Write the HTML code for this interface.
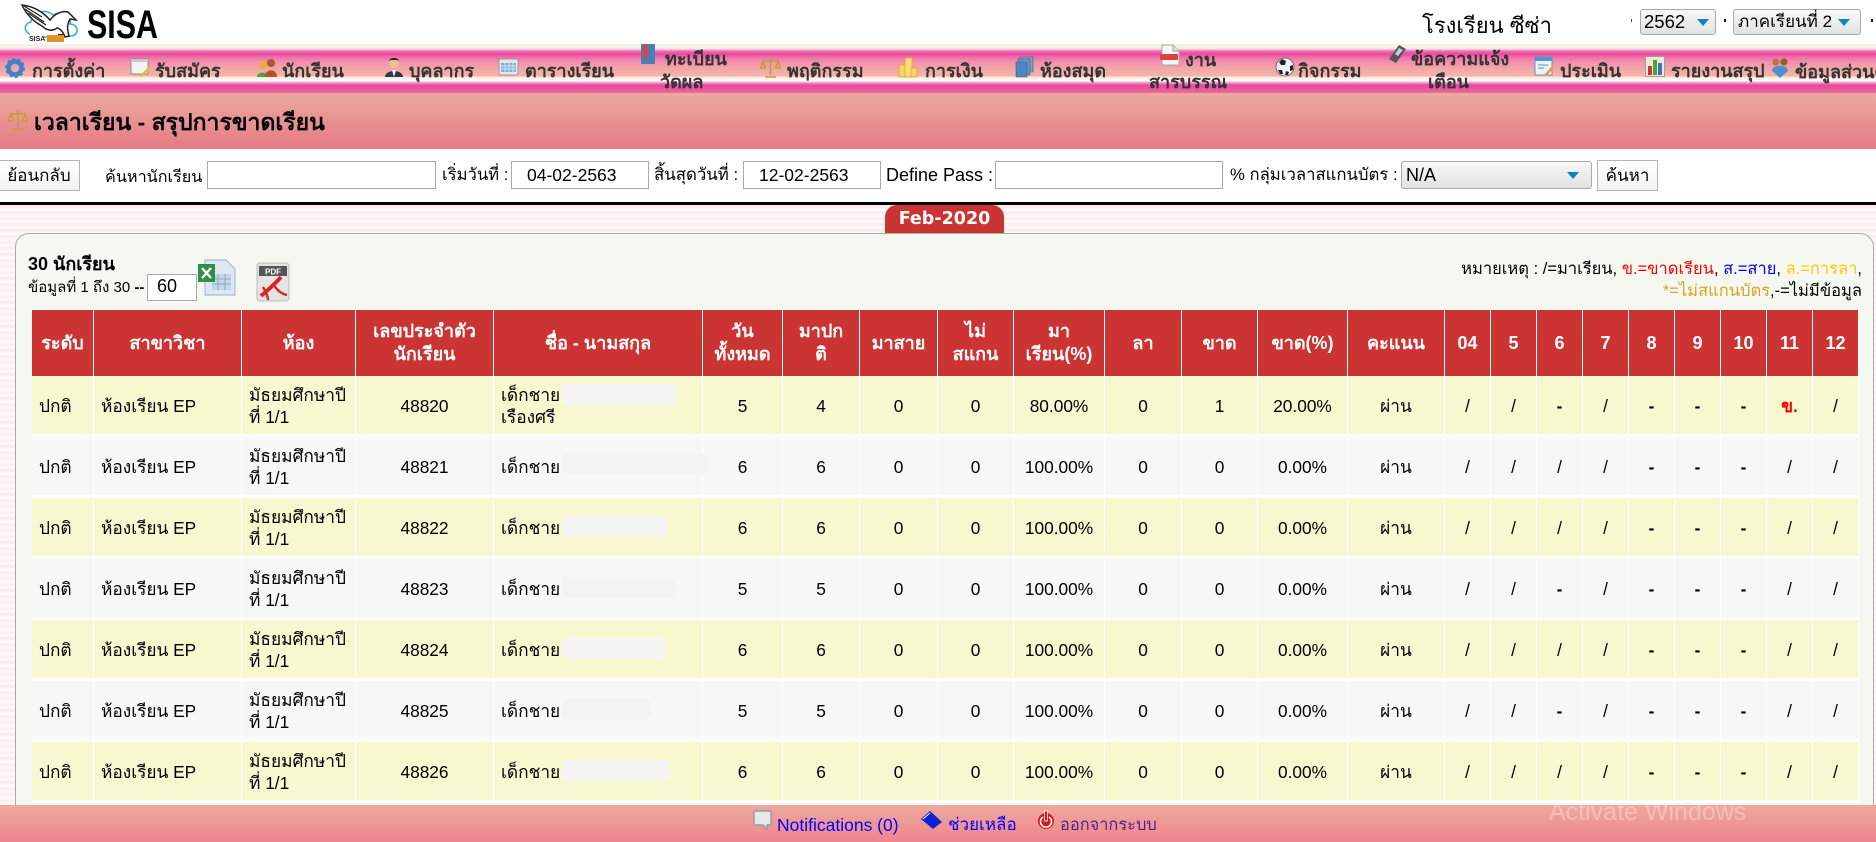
<!DOCTYPE html>
<html lang="th">
<head>
<meta charset="utf-8">
<title>SISA</title>
<style>
html,body{margin:0;padding:0;width:1876px;height:842px;overflow:hidden;background:#fff;}
body{position:relative;font-family:"Liberation Sans","Noto Sans CJK JP",sans-serif;font-size:17px;color:#000;}
.a{position:absolute;white-space:nowrap;}
#nav{position:absolute;left:0;top:44px;width:1876px;height:49px;overflow:hidden;
background:linear-gradient(to bottom,#f6f1e8 0,#f6f1e8 4px,#fbdcec 5px,#f070b0 7px,#ea48a0 10px,#ee6cac 13px,#f292ac 18px,#f3aaa6 26px,#f4b4aa 32px,#fbe6df 33px,#fffaf4 36px,#fff 37px,#f6b6d6 38px,#ea48a0 41px,#ea52a0 44px,#e86c94 49px);}
.n{position:absolute;white-space:nowrap;color:#333;font-weight:bold;font-size:18px;line-height:20px;}
.i{position:absolute;}
#title{position:absolute;left:0;top:93px;width:1876px;height:56px;background:linear-gradient(to bottom,#ebaa9e,#e57a85);}
#bg{position:absolute;left:0;top:205px;width:1876px;height:637px;background:repeating-linear-gradient(to bottom,#fbeeee 0,#fbeeee 3px,#fff8f6 3px,#fff8f6 6px);}
#line{position:absolute;left:0;top:202px;width:1876px;height:3px;background:#000;}
#card{position:absolute;left:15px;top:233px;width:1859px;height:620px;background:#f5f8f0;border:1px solid #aaa;border-radius:14px;box-sizing:border-box;}
#tab{position:absolute;left:885px;top:205px;width:119px;height:28px;background:#cc3333;border-radius:12px 12px 0 0;color:#fff;font-family:"DejaVu Sans",sans-serif;font-weight:bold;font-size:17.5px;line-height:29px;text-align:center;}
.inp{position:absolute;box-sizing:border-box;height:28px;background:#fff;border:1px solid #a9a9a9;font-size:17.5px;line-height:26px;padding-left:15px;}
.btn{position:absolute;box-sizing:border-box;background:linear-gradient(#fff,#f2f2f2);border:1px solid #b5b5b5;height:31px;text-align:center;font-size:17px;line-height:29px;}
.sel{position:absolute;box-sizing:border-box;background:linear-gradient(#f8f8f8,#e2e2e2);border:1px solid #aaa;border-radius:3px;font-size:17px;}
.tri{position:absolute;width:0;height:0;border-left:6px solid transparent;border-right:6px solid transparent;border-top:7px solid #0a86bd;}
#wrap{position:absolute;left:32px;top:310px;width:1827px;}
table{border-collapse:separate;border-spacing:0;table-layout:fixed;width:1827px;font-size:17.3px;line-height:22px;}
th{height:66px;padding:0;background:#cc3333;color:#fff;font-weight:bold;font-size:18px;border-right:1px solid #fff;box-sizing:border-box;line-height:23px;}
td{height:61px;padding:1px 0 0 0;border-right:1px solid #fff;border-bottom:3px solid #fff;box-sizing:border-box;text-align:center;}
tr.o td{background:#f7f8cf;}
tr.e td{background:#f7f7f7;}
td.l{text-align:left;padding-left:7px;}
td.r{color:#f00;font-weight:bold;}
.blob{position:absolute;background:#f4f4f2;border-radius:6px;height:21px;}
#foot{position:absolute;left:0;top:805px;width:1876px;height:37px;background:linear-gradient(to bottom,#eeaa9e,#ee858d);}
</style>
</head>
<body>

<!-- Logo -->
<svg class="i" style="left:20px;top:2px" width="62" height="42" viewBox="0 0 62 42">
  <path d="M10 32 C4 30 3 22 11 20 C12 10 26 6 33 13 C42 8 52 14 50 22 C58 22 60 32 52 34 L24 35" fill="none" stroke="#3fa9e0" stroke-width="1.6"/>
  <path d="M2 3 C12 4 22 9 30 18 C33 14 40 8 48 10 L56 18 L50 17 C47 22 47 27 49 34 L45 35 C43 30 41 27 37 26 C32 30 26 28 22 24 C14 20 6 12 2 3Z" fill="#fff" stroke="#222" stroke-width="1.5"/>
  <path d="M5 7 L24 20 M8 11 L26 23 M4 4 L22 15" stroke="#222" stroke-width="1.2"/>
  <rect x="38" y="32" width="6" height="5" fill="#222"/>
  <text x="9" y="39" font-family="Liberation Sans" font-size="7" font-weight="bold" fill="#222">SISA</text>
  <rect x="27" y="33" width="17" height="7" fill="#e8912c"/>
</svg>
<div class="a" style="left:87px;top:3px;font-weight:bold;font-size:40px;line-height:44px;transform:scaleX(.76);transform-origin:left top;">SISA</div>

<div class="a" style="left:1422px;top:11px;font-size:22px;line-height:30px;">โรงเรียน ซีซ่า</div>
<div class="a" style="left:1631px;top:19px;width:1px;height:3px;background:#444;"></div>
<div class="sel" style="left:1640px;top:9px;width:76px;height:26px;line-height:24px;padding-left:3px;font-size:18.5px;">2562<span class="tri" style="left:56px;top:9px;"></span></div>
<div class="a" style="left:1724px;top:19px;width:2px;height:3px;background:#111;"></div>
<div class="sel" style="left:1733px;top:9px;width:128px;height:26px;line-height:24px;padding-left:4px;">ภาคเรียนที่ 2<span class="tri" style="left:104px;top:9px;"></span></div>
<div class="a" style="left:1871px;top:19px;width:2px;height:3px;background:#111;"></div>

<!-- Nav -->
<div id="nav">
  <svg class="i" style="left:5px;top:14px" width="20" height="20" viewBox="0 0 20 20"><circle cx="10" cy="10" r="6.5" fill="none" stroke="#3d83c9" stroke-width="4.5"/><circle cx="10" cy="10" r="9" fill="none" stroke="#3d83c9" stroke-width="2" stroke-dasharray="3 2.6"/></svg>
  <div class="n" style="left:32px;top:17px">การตั้งค่า</div>

  <svg class="i" style="left:130px;top:14px" width="21" height="20" viewBox="0 0 21 20"><rect x="1" y="1" width="17" height="15" fill="#f3f3f3" stroke="#8b8b8b"/><rect x="1" y="1" width="17" height="3" fill="#c9c9c9"/><path d="M10 18 L18 9 L20 11 L12 19Z" fill="#e8b83a"/></svg>
  <div class="n" style="left:155px;top:17px">รับสมัคร</div>

  <svg class="i" style="left:256px;top:14px" width="22" height="20" viewBox="0 0 22 20"><circle cx="7" cy="7" r="4" fill="#e3b23c"/><path d="M1 19 C1 13 13 13 13 19Z" fill="#4ba04a"/><circle cx="15" cy="5" r="4" fill="#a85a28"/><path d="M9 19 C9 10 21 10 21 19Z" fill="#b5502e"/></svg>
  <div class="n" style="left:282px;top:17px">นักเรียน</div>

  <svg class="i" style="left:384px;top:13px" width="20" height="21" viewBox="0 0 20 21"><circle cx="10" cy="6" r="5" fill="#e8c09a"/><path d="M5 4 C6 0 14 0 15 4 L13 3 H7Z" fill="#222"/><path d="M1 20 C1 12 19 12 19 20Z" fill="#2c3a4f"/><path d="M8 13 L12 13 L10 20Z" fill="#fff"/></svg>
  <div class="n" style="left:409px;top:17px">บุคลากร</div>

  <svg class="i" style="left:498px;top:14px" width="21" height="18" viewBox="0 0 21 18"><rect x="1" y="1" width="19" height="16" rx="1" fill="#e6e6e6" stroke="#999"/><rect x="3" y="5" width="15" height="9" fill="#7eaee0"/><path d="M3 8H18M3 11H18M7 5V14M11 5V14M15 5V14" stroke="#d8e6f5"/></svg>
  <div class="n" style="left:525px;top:17px">ตารางเรียน</div>

  <svg class="i" style="left:640px;top:0" width="16" height="21" viewBox="0 0 16 21"><rect x="1" y="0" width="14" height="20" rx="1" fill="#4a7fb5"/><rect x="3" y="1" width="5" height="13" fill="#d24848"/></svg>
  <div class="n" style="left:665px;top:5px">ทะเบียน</div>
  <div class="n" style="left:660px;top:28px">วัดผล</div>

  <svg class="i" style="left:760px;top:12px" width="21" height="22" viewBox="0 0 21 22" fill="none" stroke="#c99a3a" stroke-width="1.6"><path d="M10.5 1V19M5 21H16M3 5H18"/><path d="M3 5L0.8 12H5.2ZM18 5L15.8 12H20.2Z" fill="#e6c15e"/></svg>
  <div class="n" style="left:787px;top:17px">พฤติกรรม</div>

  <svg class="i" style="left:898px;top:13px" width="20" height="21" viewBox="0 0 20 21"><rect x="1" y="8" width="7" height="12" fill="#f6d467" stroke="#d9a935" stroke-width=".8"/><rect x="7" y="1" width="7" height="19" fill="#f9de78" stroke="#d9a935" stroke-width=".8"/><rect x="13" y="11" width="6" height="9" fill="#f6d467" stroke="#d9a935" stroke-width=".8"/></svg>
  <div class="n" style="left:925px;top:17px">การเงิน</div>

  <svg class="i" style="left:1015px;top:12px" width="19" height="22" viewBox="0 0 19 22"><path d="M5 1H18V16H5Z" fill="#7aa0c8" stroke="#3b5f85" stroke-width=".6"/><path d="M3 3H15V19H3Z" fill="#6a95c3" stroke="#3b5f85" stroke-width=".6"/><path d="M1 6H12V21H1Z" fill="#4f86bf" stroke="#3b5f85" stroke-width=".6"/></svg>
  <div class="n" style="left:1040px;top:17px">ห้องสมุด</div>

  <svg class="i" style="left:1159px;top:0" width="22" height="22" viewBox="0 0 22 22"><path d="M3 1H14L20 7V21H3Z" fill="#f6f6f6" stroke="#a5a5a5"/><path d="M14 1V7H20" fill="#ddd" stroke="#a5a5a5"/><rect x="1" y="10" width="18" height="6" rx="1" fill="#d9443f"/></svg>
  <div class="n" style="left:1185px;top:6px">งาน</div>
  <div class="n" style="left:1149px;top:28px">สารบรรณ</div>

  <svg class="i" style="left:1275px;top:13px" width="20" height="21" viewBox="0 0 20 21"><circle cx="10" cy="10" r="9" fill="#f2f2f2" stroke="#555" stroke-width=".8"/><path d="M7 2L11 4L10 8L6 8L4 5ZM15 9L18 8L18 13L15 14ZM3 13L7 13L8 17L5 17ZM11 14L14 15L13 18L10 18Z" fill="#222"/></svg>
  <div class="n" style="left:1298px;top:17px">กิจกรรม</div>

  <svg class="i" style="left:1387px;top:1px" width="20" height="18" viewBox="0 0 20 18"><path d="M12 0L19 4L9 18L2 14Z" fill="#555"/><path d="M12 3L16 5L11 11L8 9Z" fill="#bcd0e0"/></svg>
  <div class="n" style="left:1411px;top:5px">ข้อความแจ้ง</div>
  <div class="n" style="left:1428px;top:28px">เตือน</div>

  <svg class="i" style="left:1534px;top:12px" width="20" height="21" viewBox="0 0 20 21"><rect x="1" y="1" width="17" height="18" fill="#eaf2fa" stroke="#5a94c8"/><rect x="1" y="1" width="17" height="4" fill="#5a94c8"/><path d="M4 9H14M4 12H10" stroke="#7a8a98"/><path d="M10 19L18 10L20 12L12 20Z" fill="#eb9c2c"/></svg>
  <div class="n" style="left:1560px;top:17px">ประเมิน</div>

  <svg class="i" style="left:1645px;top:12px" width="20" height="21" viewBox="0 0 20 21"><rect x="0.5" y="0.5" width="19" height="20" fill="#efe8d8" stroke="#a99"/><rect x="3" y="10" width="4" height="9" fill="#d62f2f"/><rect x="8" y="4" width="4" height="15" fill="#3da83d"/><rect x="13" y="7" width="4" height="12" fill="#3a70c8"/></svg>
  <div class="n" style="left:1671px;top:17px">รายงานสรุป</div>

  <svg class="i" style="left:1771px;top:13px" width="18" height="21" viewBox="0 0 18 21"><circle cx="5" cy="5" r="3.5" fill="#b9773d"/><circle cx="13" cy="5" r="3.5" fill="#8f5a30"/><path d="M1 14 C1 7 17 7 17 14 L9 21Z" fill="#4b92cc"/></svg>
  <div class="n" style="left:1795px;top:18px">ข้อมูลส่วนตัว</div>
</div>

<!-- Title -->
<div id="title"></div>
<svg class="i" style="left:8px;top:109px" width="20" height="21" viewBox="0 0 21 22" fill="none" stroke="#c99a3a" stroke-width="1.6"><path d="M10.5 1V19M5 21H16M3 5H18"/><path d="M3 5L0.8 12H5.2ZM18 5L15.8 12H20.2Z" fill="#e6c15e"/></svg>
<div class="a" style="left:34px;top:108px;font-weight:bold;font-size:23px;line-height:28px;">เวลาเรียน - สรุปการขาดเรียน</div>

<!-- Search -->
<div class="btn" style="left:-2px;top:160px;width:82px;">ย้อนกลับ</div>
<div class="a" style="left:105px;top:164px;line-height:26px;font-size:16.2px;">ค้นหานักเรียน</div>
<div class="inp" style="left:207px;top:161px;width:229px;"></div>
<div class="a" style="left:442px;top:163px;line-height:24px;font-size:16.6px;">เริ่มวันที่ :</div>
<div class="inp" style="left:511px;top:161px;width:138px;">04-02-2563</div>
<div class="a" style="left:654px;top:163px;line-height:24px;font-size:16.8px;">สิ้นสุดวันที่ :</div>
<div class="inp" style="left:743px;top:161px;width:138px;">12-02-2563</div>
<div class="a" style="left:886px;top:163px;line-height:24px;font-size:18px;">Define Pass :</div>
<div class="inp" style="left:995px;top:161px;width:228px;"></div>
<div class="a" style="left:1230px;top:162px;line-height:26px;font-size:16.7px;">% กลุ่มเวลาสแกนบัตร :</div>
<div class="sel" style="left:1401px;top:161px;width:191px;height:28px;line-height:27px;padding-left:4px;font-size:18px;">N/A<span class="tri" style="left:165px;top:10px;"></span></div>
<div class="btn" style="left:1597px;top:160px;width:61px;">ค้นหา</div>

<div id="line"></div>
<div id="bg"></div>
<div id="card"></div>
<div id="tab">Feb-2020</div>

<div class="a" style="left:28px;top:253px;font-weight:bold;font-size:18px;line-height:22px;">30 นักเรียน</div>
<div class="a" style="left:28px;top:278px;font-size:15px;line-height:20px;">ข้อมูลที่ 1 ถึง 30 <b>--</b></div>
<div class="inp" style="left:147px;top:274px;width:50px;height:27px;font-size:18px;line-height:23px;padding-left:9px;">60</div>
<svg class="i" style="left:198px;top:258px" width="38" height="38" viewBox="0 0 38 38"><path d="M7 2H28L37 11V37H7Z" fill="#dfe8f2" stroke="#9ab0c8"/><path d="M14 16H33V32H14Z" fill="#c4d7ea"/><path d="M14 21H33M14 26H33M20 16V32M27 16V32" stroke="#8aa8c8"/><rect x="0" y="6" width="17" height="18" fill="#2f8f45"/><path d="M4 10L13 20M13 10L4 20" stroke="#fff" stroke-width="2.4"/></svg>
<svg class="i" style="left:256px;top:262px" width="34" height="40" viewBox="0 0 34 40"><rect x="1" y="1" width="32" height="38" rx="3" fill="#e4e4e4" stroke="#bbb"/><rect x="3" y="4" width="28" height="10" fill="#555"/><text x="17" y="12.5" text-anchor="middle" font-family="Liberation Sans" font-size="8" font-weight="bold" fill="#fff">PDF</text><path d="M5 34C12 28 19 22 25 15" fill="none" stroke="#d8262c" stroke-width="4"/><path d="M17 22C21 28 25 32 31 33M7 25C10 30 12 34 12 38" fill="none" stroke="#d8262c" stroke-width="2.4"/></svg>

<div class="a" style="right:14px;top:258px;font-size:16.5px;line-height:22px;text-align:right;">หมายเหตุ : /=มาเรียน, <span style="color:#f00">ข.=ขาดเรียน</span>, <span style="color:#00f">ส.=สาย</span>, <span style="color:#fc0">ล.=การลา</span>,<br><span style="color:#daa520">*=ไม่สแกนบัตร</span>,-=ไม่มีข้อมูล</div>

<!-- Table -->
<div id="wrap">
<table>
<colgroup><col style="width:62px"><col style="width:148px"><col style="width:114px"><col style="width:138px"><col style="width:209px"><col style="width:80px"><col style="width:77px"><col style="width:78px"><col style="width:76px"><col style="width:91px"><col style="width:77px"><col style="width:76px"><col style="width:90px"><col style="width:97px"><col style="width:46px"><col style="width:46px"><col style="width:46px"><col style="width:46px"><col style="width:46px"><col style="width:46px"><col style="width:46px"><col style="width:46px"><col style="width:46px"></colgroup>
<tr><th>ระดับ</th><th>สาขาวิชา</th><th>ห้อง</th><th>เลขประจำตัว<br>นักเรียน</th><th>ชื่อ - นามสกุล</th><th>วัน<br>ทั้งหมด</th><th>มาปก<br>ติ</th><th>มาสาย</th><th>ไม่<br>สแกน</th><th>มา<br>เรียน(%)</th><th>ลา</th><th>ขาด</th><th>ขาด(%)</th><th>คะแนน</th><th>04</th><th>5</th><th>6</th><th>7</th><th>8</th><th>9</th><th>10</th><th>11</th><th>12</th></tr>
<tr class="o"><td class="l">ปกติ</td><td class="l">ห้องเรียน EP</td><td class="l">มัธยมศึกษาปี<br>ที่ 1/1</td><td>48820</td><td class="l">เด็กชาย<br>เรืองศรี</td><td>5</td><td>4</td><td>0</td><td>0</td><td>80.00%</td><td>0</td><td>1</td><td>20.00%</td><td>ผ่าน</td><td>/</td><td>/</td><td><b>-</b></td><td>/</td><td><b>-</b></td><td><b>-</b></td><td><b>-</b></td><td class="r">ข.</td><td>/</td></tr>
<tr class="e"><td class="l">ปกติ</td><td class="l">ห้องเรียน EP</td><td class="l">มัธยมศึกษาปี<br>ที่ 1/1</td><td>48821</td><td class="l">เด็กชาย</td><td>6</td><td>6</td><td>0</td><td>0</td><td>100.00%</td><td>0</td><td>0</td><td>0.00%</td><td>ผ่าน</td><td>/</td><td>/</td><td>/</td><td>/</td><td><b>-</b></td><td><b>-</b></td><td><b>-</b></td><td>/</td><td>/</td></tr>
<tr class="o"><td class="l">ปกติ</td><td class="l">ห้องเรียน EP</td><td class="l">มัธยมศึกษาปี<br>ที่ 1/1</td><td>48822</td><td class="l">เด็กชาย</td><td>6</td><td>6</td><td>0</td><td>0</td><td>100.00%</td><td>0</td><td>0</td><td>0.00%</td><td>ผ่าน</td><td>/</td><td>/</td><td>/</td><td>/</td><td><b>-</b></td><td><b>-</b></td><td><b>-</b></td><td>/</td><td>/</td></tr>
<tr class="e"><td class="l">ปกติ</td><td class="l">ห้องเรียน EP</td><td class="l">มัธยมศึกษาปี<br>ที่ 1/1</td><td>48823</td><td class="l">เด็กชาย</td><td>5</td><td>5</td><td>0</td><td>0</td><td>100.00%</td><td>0</td><td>0</td><td>0.00%</td><td>ผ่าน</td><td>/</td><td>/</td><td><b>-</b></td><td>/</td><td><b>-</b></td><td><b>-</b></td><td><b>-</b></td><td>/</td><td>/</td></tr>
<tr class="o"><td class="l">ปกติ</td><td class="l">ห้องเรียน EP</td><td class="l">มัธยมศึกษาปี<br>ที่ 1/1</td><td>48824</td><td class="l">เด็กชาย</td><td>6</td><td>6</td><td>0</td><td>0</td><td>100.00%</td><td>0</td><td>0</td><td>0.00%</td><td>ผ่าน</td><td>/</td><td>/</td><td>/</td><td>/</td><td><b>-</b></td><td><b>-</b></td><td><b>-</b></td><td>/</td><td>/</td></tr>
<tr class="e"><td class="l">ปกติ</td><td class="l">ห้องเรียน EP</td><td class="l">มัธยมศึกษาปี<br>ที่ 1/1</td><td>48825</td><td class="l">เด็กชาย</td><td>5</td><td>5</td><td>0</td><td>0</td><td>100.00%</td><td>0</td><td>0</td><td>0.00%</td><td>ผ่าน</td><td>/</td><td>/</td><td><b>-</b></td><td>/</td><td><b>-</b></td><td><b>-</b></td><td><b>-</b></td><td>/</td><td>/</td></tr>
<tr class="o"><td class="l">ปกติ</td><td class="l">ห้องเรียน EP</td><td class="l">มัธยมศึกษาปี<br>ที่ 1/1</td><td>48826</td><td class="l">เด็กชาย</td><td>6</td><td>6</td><td>0</td><td>0</td><td>100.00%</td><td>0</td><td>0</td><td>0.00%</td><td>ผ่าน</td><td>/</td><td>/</td><td>/</td><td>/</td><td><b>-</b></td><td><b>-</b></td><td><b>-</b></td><td>/</td><td>/</td></tr>
</table>
</div>

<!-- Scribbles -->
<div class="blob" style="left:562px;top:384px;width:114px;"></div>
<div class="blob" style="left:562px;top:454px;width:146px;"></div>
<div class="blob" style="left:562px;top:516px;width:105px;"></div>
<div class="blob" style="left:562px;top:577px;width:114px;"></div>
<div class="blob" style="left:562px;top:638px;width:103px;"></div>
<div class="blob" style="left:562px;top:699px;width:88px;"></div>
<div class="blob" style="left:562px;top:760px;width:108px;"></div>

<!-- Footer -->
<div id="foot"></div>
<svg class="i" style="left:753px;top:810px" width="19" height="20" viewBox="0 0 19 20"><path d="M2 1H17A1 1 0 0 1 18 2V14A1 1 0 0 1 17 15H14V19L10 15H2A1 1 0 0 1 1 14V2A1 1 0 0 1 2 1Z" fill="#e8e8e8" stroke="#999" stroke-width="1.4"/></svg>
<div class="a" style="left:777px;top:814px;color:#00f;line-height:22px;font-size:17.5px;">Notifications (0)</div>
<svg class="i" style="left:920px;top:810px" width="23" height="20" viewBox="0 0 23 20"><path d="M1 9L10 1L22 12L13 19Z" fill="#0a22d8"/><path d="M3 9L10 3" stroke="#fff" stroke-width="1"/></svg>
<div class="a" style="left:948px;top:814px;color:#00f;line-height:22px;">ช่วยเหลือ</div>
<svg class="i" style="left:1037px;top:810px" width="18" height="20" viewBox="0 0 18 20"><circle cx="9" cy="11" r="8" fill="#d41a1a"/><path d="M6 7A5.5 5.5 0 1 0 12 7" fill="none" stroke="#fff" stroke-width="1.6"/><rect x="7.5" y="1" width="3" height="10" fill="#d41a1a" stroke="#fff" stroke-width=".8"/></svg>
<div class="a" style="left:1060px;top:814px;color:#55228c;line-height:22px;font-size:16.4px;">ออกจากระบบ</div>
<div class="a" style="left:1549px;top:797px;font-size:25px;line-height:30px;color:rgba(255,255,255,.32);">Activate Windows</div>

</body>
</html>
